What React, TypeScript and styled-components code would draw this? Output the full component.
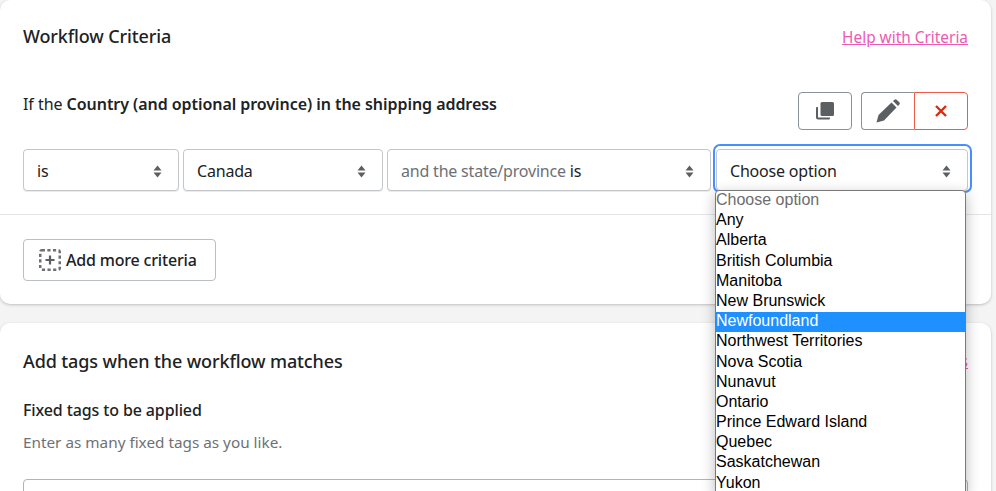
import styled, { createGlobalStyle } from "styled-components";

const provinces = [
  "Choose option",
  "Any",
  "Alberta",
  "British Columbia",
  "Manitoba",
  "New Brunswick",
  "Newfoundland",
  "Northwest Territories",
  "Nova Scotia",
  "Nunavut",
  "Ontario",
  "Prince Edward Island",
  "Quebec",
  "Saskatchewan",
  "Yukon",
];

const Arrows = () => (
  <svg width="9" height="13" viewBox="0 0 9 13" fill="#5c5f62">
    <path d="M4.5 0.5 L8.5 5.5 H0.5 Z" />
    <path d="M4.5 12.5 L0.5 7.5 H8.5 Z" />
  </svg>
);

const CopyIcon = () => (
  <svg width="18" height="18" viewBox="0 0 18 18" fill="#5c5f62">
    <rect x="4.5" y="0" width="13.5" height="14" rx="1.5" />
    <path d="M0 6 a1 1 0 0 1 1 -1 H2 V15.5 H14 V16.5 a1 1 0 0 1 -1 1 H2 a2 2 0 0 1 -2 -2 Z" />
  </svg>
);

const PencilIcon = () => (
  <svg width="24" height="24" viewBox="0 0 24 24" fill="#5c5f62">
    <path d="M0.5 23.5 L2.5 16 L15.5 3.5 L20.5 8.5 L8 21.5 Z" />
    <path d="M17 2 L18.5 0.7 a1.6 1.6 0 0 1 2.2 0 L23.3 3.3 a1.6 1.6 0 0 1 0 2.2 L22 7 Z" />
  </svg>
);

const CloseIcon = () => (
  <svg width="12" height="12" viewBox="0 0 12 12" stroke="#d72c0d" strokeWidth="2.4" fill="none">
    <path d="M1 1 L11 11 M11 1 L1 11" />
  </svg>
);

const AddIcon = () => (
  <svg width="22" height="22" viewBox="0 0 22 22" fill="none">
    <rect x="1.25" y="1.25" width="19.5" height="19.5" rx="1.5" stroke="#6d7175" strokeWidth="2.5" strokeDasharray="3.2 2.4" />
    <path d="M11 6.5 V15.5 M6.5 11 H15.5" stroke="#5c5f62" strokeWidth="2.2" />
  </svg>
);

export default function App() {
  return (
    <>
      <GlobalStyle />
      <Page>
        <Card>
          <CardHeader>
            <Title>Workflow Criteria</Title>
            <HelpLink href="#">Help with Criteria</HelpLink>
          </CardHeader>
          <ConditionRow>
            <Condition>
              If the <strong>Country (and optional province) in the shipping address</strong>
            </Condition>
            <Actions>
              <IconButton $width={54}>
                <CopyIcon />
              </IconButton>
              <ButtonGroup>
                <IconButton $width={53} $joined="left">
                  <PencilIcon />
                </IconButton>
                <IconButton $width={54} $joined="right" $danger>
                  <CloseIcon />
                </IconButton>
              </ButtonGroup>
            </Actions>
          </ConditionRow>
          <SelectRow>
            <Select $width={156}>
              <span>is</span>
              <Arrows />
            </Select>
            <Select $width={200}>
              <span>Canada</span>
              <Arrows />
            </Select>
            <Select $width={324}>
              <span>
                <Muted>and the state/province</Muted> is
              </span>
              <Arrows />
            </Select>
            <FocusedSelect>
              <Select $width={252}>
                <span>Choose option</span>
                <Arrows />
              </Select>
              <Dropdown>
                {provinces.map((name, i) => (
                  <Option key={name} $placeholder={i === 0} $active={name === "Newfoundland"}>
                    {name}
                  </Option>
                ))}
              </Dropdown>
            </FocusedSelect>
          </SelectRow>
          <Divider />
          <CardFooter>
            <AddButton>
              <AddIcon />
              Add more criteria
            </AddButton>
          </CardFooter>
        </Card>
        <Card>
          <TagsHeader>
            <Title>Add tags when the workflow matches</Title>
            <HelpLink href="#">Help with Tags</HelpLink>
          </TagsHeader>
          <FieldLabel>Fixed tags to be applied</FieldLabel>
          <HelpText>Enter as many fixed tags as you like.</HelpText>
          <TagInput />
        </Card>
      </Page>
    </>
  );
}

const GlobalStyle = createGlobalStyle`
  html, body {
    margin: 0;
    height: 100%;
    overflow: hidden;
    background: #f4f4f4;
  }
  body {
    font-family: "Noto Sans", "Open Sans", sans-serif;
    color: #202223;
  }
`;

const Page = styled.div`
  display: flex;
  flex-direction: column;
  gap: 19px;
  padding-right: 5px;
`;

const Card = styled.section`
  background: #fff;
  border-radius: 10px;
  box-shadow: 0 1px 3px rgba(0, 0, 0, 0.22);
`;

const CardHeader = styled.div`
  display: flex;
  justify-content: space-between;
  align-items: center;
  padding: 24px 23px 0;
  height: 26px;

  h2 {
    margin-top: -2px;
  }
`;

const Title = styled.h2`
  margin: 0;
  font-size: 18px;
  line-height: 26px;
  font-weight: 500;
  letter-spacing: -0.12px;
`;

const HelpLink = styled.a`
  font-size: 15.4px;
  color: #ee59b1;
  text-decoration: underline;
`;

const ConditionRow = styled.div`
  display: flex;
  justify-content: space-between;
  align-items: flex-start;
  padding: 42px 23px 0;
`;

const Condition = styled.p`
  margin: 0;
  font-size: 16px;
  line-height: 24px;
  letter-spacing: -0.05px;

  strong {
    font-weight: 600;
  }
`;

const Actions = styled.div`
  display: flex;
  gap: 9px;
`;

const ButtonGroup = styled.div`
  display: flex;
`;

const IconButton = styled.button<{ $width: number; $joined?: "left" | "right"; $danger?: boolean }>`
  display: flex;
  align-items: center;
  justify-content: center;
  width: ${(p) => p.$width}px;
  height: 38px;
  padding: 0;
  background: #fff;
  border: 1px solid ${(p) => (p.$danger ? "#ee5a45" : "#8c9196")};
  border-radius: ${(p) =>
    p.$joined === "left" ? "4px 0 0 4px" : p.$joined === "right" ? "0 4px 4px 0" : "4px"};
  ${(p) => p.$joined === "left" && "border-right: 0;"}
`;

const SelectRow = styled.div`
  display: flex;
  gap: 4px;
  padding: 19px 23px 0;
`;

const Select = styled.div<{ $width: number }>`
  display: flex;
  align-items: center;
  justify-content: space-between;
  box-sizing: border-box;
  width: ${(p) => p.$width}px;
  height: 42px;
  padding: 2px 16px 0 13px;
  background: #fff;
  border: 1px solid #c4c7ca;
  border-radius: 4px;
  box-shadow: 0 1px 0 rgba(0, 0, 0, 0.08);
  font-size: 16px;
  letter-spacing: -0.2px;
  white-space: nowrap;
`;

const Muted = styled.span`
  color: #6d7175;
`;

const FocusedSelect = styled.div`
  position: relative;
  margin-left: 1px;

  &::after {
    content: "";
    position: absolute;
    inset: -5px -4px -2px -3px;
    border: 2.5px solid #458fff;
    border-radius: 7px;
    pointer-events: none;
  }
`;

const Dropdown = styled.ul`
  position: absolute;
  top: 41px;
  left: -1px;
  z-index: 5;
  box-sizing: border-box;
  width: 251px;
  margin: 0;
  padding: 0;
  list-style: none;
  background: #fff;
  border: 1px solid #7a7a7a;
  border-radius: 4px;
  box-shadow: 0 4px 14px rgba(0, 0, 0, 0.28);
  font-family: "Liberation Sans", Arial, sans-serif;
  font-size: 16px;
`;

const Option = styled.li<{ $placeholder?: boolean; $active?: boolean }>`
  height: 20.2px;
  line-height: 17px;
  color: ${(p) => (p.$active ? "#fff" : p.$placeholder ? "#6d6d6d" : "#000")};
  background: ${(p) => (p.$active ? "#1e90ff" : "transparent")};
`;

const Divider = styled.hr`
  margin: 23px 0 0;
  border: 0;
  border-top: 1px solid #e4e5e7;
`;

const CardFooter = styled.div`
  padding: 24px 23px 23px;
`;

const AddButton = styled.button`
  display: flex;
  align-items: center;
  gap: 5px;
  height: 42px;
  padding: 0 18px 0 15px;
  background: #fff;
  border: 1px solid #babfc3;
  border-radius: 4px;
  font-family: inherit;
  font-size: 16px;
  font-weight: 500;
  letter-spacing: -0.18px;
  color: #202223;
`;

const TagsHeader = styled.div`
  display: flex;
  justify-content: space-between;
  align-items: center;
  padding: 25px 23px 0;
`;

const FieldLabel = styled.div`
  padding: 25px 23px 0;
  font-size: 16px;
  line-height: 22px;
  font-weight: 500;
  letter-spacing: -0.12px;
`;

const HelpText = styled.div`
  padding: 10px 23px 0;
  font-size: 15.3px;
  line-height: 22px;
  color: #6d7175;
`;

const TagInput = styled.div`
  box-sizing: border-box;
  height: 42px;
  margin: 26px 23px 0;
  border: 1px solid #aeb4b9;
  border-radius: 4px;
`;
